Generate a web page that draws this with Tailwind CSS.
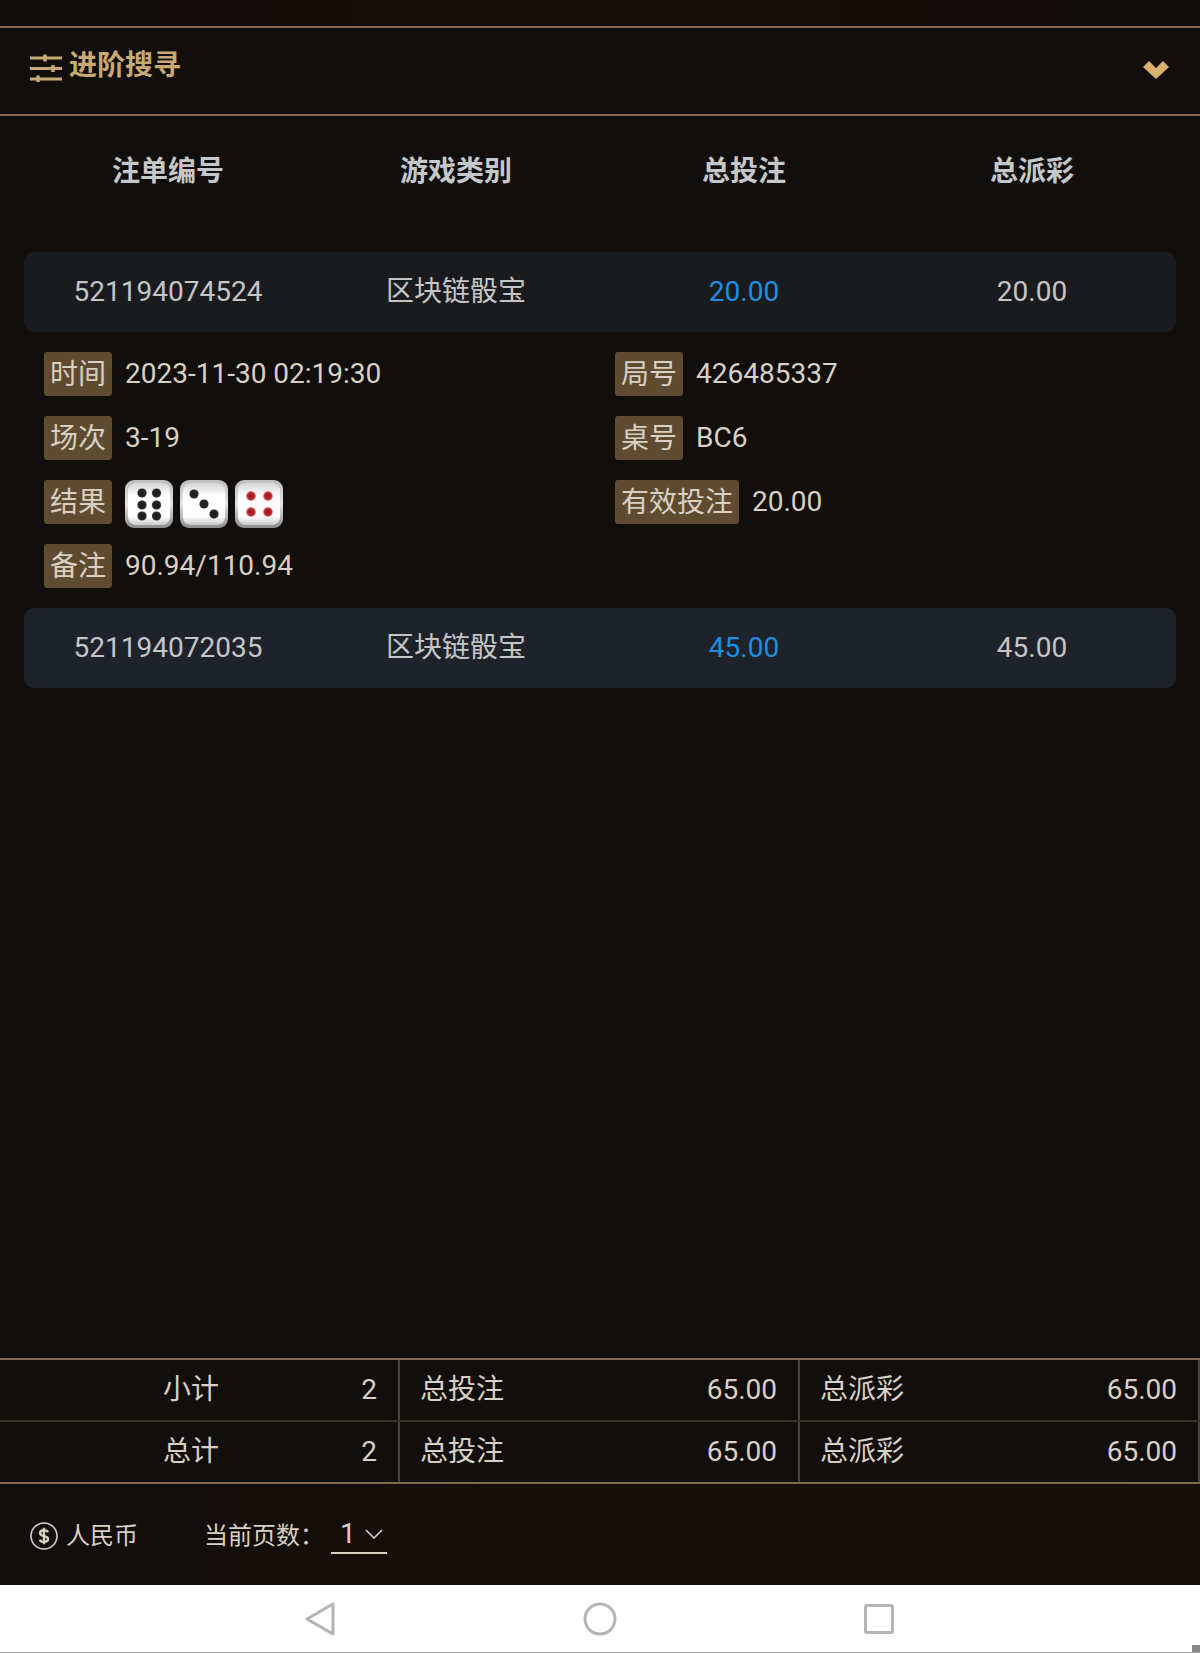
<!DOCTYPE html>
<html lang="zh-CN">
<head>
  <meta charset="UTF-8" />
  <meta name="viewport" content="width=device-width, initial-scale=1.0" />
  <title>注单详情</title>
  <script src="https://cdn.jsdelivr.net/npm/@tailwindcss/browser@4"></script>
</head>
<body class="bg-[#110e0c]">
<div class="flex flex-col w-[1200px] h-[1653px] overflow-hidden bg-[#110e0c] text-[28px] text-[#d8d0c4] font-['Roboto','Noto_Sans_CJK_SC',sans-serif]">

  <!-- top strip -->
  <div class="h-[26px] shrink-0 bg-gradient-to-r from-[#100c0a] via-[#160e09] to-[#100c0a]"></div>

  <!-- advanced search -->
  <div class="flex items-center justify-between h-[90px] shrink-0 pl-[30px] pr-[31px] pb-[8px] border-y-2 border-[#7f6a4e] text-[#c9a973]">
    <div class="flex items-center gap-[7px]">
      <svg class="mt-[2px]" width="32" height="28" viewBox="0 0 32 28" fill="none" stroke="#c9a973" stroke-width="3">
        <path d="M0 4h32M0 14.500h32M0 25h32" />
        <path d="M15 0.500v7M23 11v7M8 21.500v6.500" stroke-width="3.500" />
      </svg>
      <span class="font-bold leading-none mb-[2px]">进阶搜寻</span>
    </div>
    <svg class="mt-[5px]" width="26" height="18" viewBox="0 0 26 18" fill="#d9b26f">
      <path d="M0 6 L6 0 L13 7 L20 0 L26 6 L13 18 Z" />
    </svg>
  </div>

  <!-- column heads -->
  <div class="grid grid-cols-4 h-[108px] shrink-0 mx-[24px] mb-[28px] pt-[4px] items-center text-center font-bold text-[#c5c8cb]">
    <div>注单编号</div>
    <div>游戏类别</div>
    <div>总投注</div>
    <div>总派彩</div>
  </div>

  <!-- first order -->
  <div class="grid grid-cols-4 h-[80px] shrink-0 mx-[24px] items-center text-center rounded-[10px] bg-[#1a1b1f] text-[#c4c5c6]">
    <div>521194074524</div>
    <div>区块链骰宝</div>
    <div class="text-[#1a8fe3]">20.00</div>
    <div>20.00</div>
  </div>

  <!-- details -->
  <div class="grid grid-cols-[571px_1fr] gap-y-5 shrink-0 px-[44px] py-[20px]">
    <div class="flex items-center gap-[13px] h-11">
      <span class="h-11 leading-[45px] px-[6px] rounded-[3px] bg-[#5f4c30]">时间</span>
      <span>2023-11-30 02:19:30</span>
    </div>
    <div class="flex items-center gap-[13px] h-11">
      <span class="h-11 leading-[45px] px-[6px] rounded-[3px] bg-[#5f4c30]">局号</span>
      <span>426485337</span>
    </div>
    <div class="flex items-center gap-[13px] h-11">
      <span class="h-11 leading-[45px] px-[6px] rounded-[3px] bg-[#5f4c30]">场次</span>
      <span>3-19</span>
    </div>
    <div class="flex items-center gap-[13px] h-11">
      <span class="h-11 leading-[45px] px-[6px] rounded-[3px] bg-[#5f4c30]">桌号</span>
      <span>BC6</span>
    </div>
    <div class="flex items-start gap-[13px] h-11">
      <span class="h-11 leading-[45px] px-[6px] rounded-[3px] bg-[#5f4c30]">结果</span>
      <div class="flex gap-[7px]">
        <svg width="48" height="48" viewBox="0 0 48 48">
          <defs>
            <linearGradient id="edge" x1="0" y1="0" x2="0" y2="1">
              <stop offset="0" stop-color="#bdbdbd" />
              <stop offset="0.5" stop-color="#e4e4e4" />
              <stop offset="1" stop-color="#8c8c8c" />
            </linearGradient>
            <linearGradient id="face" x1="0" y1="0" x2="0" y2="1">
              <stop offset="0" stop-color="#d4d4d4" />
              <stop offset="0.3" stop-color="#ffffff" />
              <stop offset="0.8" stop-color="#ffffff" />
              <stop offset="1" stop-color="#c8c8c8" />
            </linearGradient>
            <radialGradient id="blackpip">
              <stop offset="0" stop-color="#1a1a1c" />
              <stop offset="0.8" stop-color="#26262a" />
              <stop offset="1" stop-color="#8c8c8c" />
            </radialGradient>
            <radialGradient id="redpip">
              <stop offset="0" stop-color="#8e1a20" />
              <stop offset="0.7" stop-color="#c0242c" />
              <stop offset="1" stop-color="#eeb0b0" />
            </radialGradient>
          </defs>
          <rect width="48" height="48" rx="9" fill="url(#edge)" />
          <rect x="3" y="3" width="42" height="42" rx="8" fill="url(#face)" />
          <g fill="url(#blackpip)">
            <circle cx="17" cy="13" r="4.800" /><circle cx="31.500" cy="13" r="4.800" />
            <circle cx="17" cy="25" r="4.800" /><circle cx="31.500" cy="25" r="4.800" />
            <circle cx="17" cy="36" r="4.800" /><circle cx="31.500" cy="36" r="4.800" />
          </g>
        </svg>
        <svg width="48" height="48" viewBox="0 0 48 48">
          <rect width="48" height="48" rx="9" fill="url(#edge)" />
          <rect x="3" y="3" width="42" height="42" rx="8" fill="url(#face)" />
          <g fill="url(#blackpip)">
            <circle cx="14" cy="14" r="4.800" /><circle cx="24" cy="24" r="4.800" /><circle cx="34" cy="34" r="4.800" />
          </g>
        </svg>
        <svg width="48" height="48" viewBox="0 0 48 48">
          <rect width="48" height="48" rx="9" fill="url(#edge)" />
          <rect x="3" y="3" width="42" height="42" rx="8" fill="url(#face)" />
          <g fill="url(#redpip)">
            <circle cx="16" cy="16" r="5" /><circle cx="33" cy="16" r="5" />
            <circle cx="16" cy="32" r="5" /><circle cx="33" cy="32" r="5" />
          </g>
        </svg>
      </div>
    </div>
    <div class="flex items-center gap-[13px] h-11">
      <span class="h-11 leading-[45px] px-[6px] rounded-[3px] bg-[#5f4c30]">有效投注</span>
      <span>20.00</span>
    </div>
    <div class="flex items-center gap-[13px] h-11">
      <span class="h-11 leading-[45px] px-[6px] rounded-[3px] bg-[#5f4c30]">备注</span>
      <span>90.94/110.94</span>
    </div>
  </div>

  <!-- second order -->
  <div class="grid grid-cols-4 h-[80px] shrink-0 mx-[24px] items-center text-center rounded-[10px] bg-[#1e222b] text-[#c4c5c6]">
    <div>521194072035</div>
    <div>区块链骰宝</div>
    <div class="text-[#1a8fe3]">45.00</div>
    <div>45.00</div>
  </div>

  <div class="flex-1"></div>

  <!-- totals -->
  <div class="shrink-0 h-[126px] border-y-2 border-[#7f6a4e] flex flex-col">
    <div class="flex h-[62px] border-b-2 border-[#3a3126]">
      <div class="flex items-center w-[400px] pr-[21px] border-r-2 border-[#4f4332]">
        <span class="flex-1 text-center pl-[21px]">小计</span><span>2</span>
      </div>
      <div class="flex items-center justify-between w-[400px] pl-[20px] pr-[21px] border-r-2 border-[#4f4332]">
        <span>总投注</span><span>65.00</span>
      </div>
      <div class="flex items-center justify-between w-[400px] pl-[20px] pr-[21px] border-r-2 border-[#4f4332]">
        <span>总派彩</span><span>65.00</span>
      </div>
    </div>
    <div class="flex flex-1">
      <div class="flex items-center w-[400px] pr-[21px] border-r-2 border-[#4f4332]">
        <span class="flex-1 text-center pl-[21px]">总计</span><span>2</span>
      </div>
      <div class="flex items-center justify-between w-[400px] pl-[20px] pr-[21px] border-r-2 border-[#4f4332]">
        <span>总投注</span><span>65.00</span>
      </div>
      <div class="flex items-center justify-between w-[400px] pl-[20px] pr-[21px] border-r-2 border-[#4f4332]">
        <span>总派彩</span><span>65.00</span>
      </div>
    </div>
  </div>

  <!-- currency and paging -->
  <div class="flex items-center h-[101px] shrink-0 pl-[30px] pt-[3px] text-[24px] bg-gradient-to-r from-[#110e0c] via-[#170e08] to-[#160f0a]">
    <svg width="28" height="28" viewBox="0 0 28 28" fill="none" stroke="#d8d0c4">
      <circle cx="14" cy="14" r="13" stroke-width="1.600" />
      <path d="M18 10.200c-.7-1.300-2.200-2-4-2-2.300 0-3.900 1.200-3.900 3 0 4 8 2 8 5.800 0 1.800-1.800 2.900-4.100 2.900-2 0-3.600-.8-4.300-2.200M14 5.800v16.400" stroke-width="2.400" />
    </svg>
    <span class="ml-[8px]">人民币</span>
    <span class="ml-[66px]">当前页数：</span>
    <div class="flex items-center ml-[7px] w-[56px] h-[36px] pl-[9px] pb-[2px] gap-[9px] border-b-2 border-[#d8d0c4] text-[28px] leading-none">
      <span>1</span>
      <svg width="18" height="10" viewBox="0 0 18 10" fill="none" stroke="#d8d0c4" stroke-width="1.600">
        <path d="M1 1l8 8 8-8" />
      </svg>
    </div>
  </div>

  <!-- android nav bar -->
  <div class="relative flex items-center h-[68px] shrink-0 bg-white border-b border-[#a8a8a8]">
    <svg class="ml-[305px]" width="30" height="34" viewBox="0 0 30 34" fill="none" stroke="#b4b4b4" stroke-width="3" stroke-linejoin="round">
      <path d="M2 17 L28 2 V32 Z" />
    </svg>
    <svg class="ml-[248px]" width="34" height="34" viewBox="0 0 34 34" fill="none" stroke="#b4b4b4" stroke-width="3">
      <circle cx="17" cy="17" r="15" />
    </svg>
    <div class="ml-[247px] w-[30px] h-[30px] rounded-[3px] border-[3px] border-[#b4b4b4]"></div>
    <div class="absolute right-0 bottom-0 w-[8px] h-[7px] bg-[#8a8a8a]"></div>
  </div>
</div>
</body>
</html>
